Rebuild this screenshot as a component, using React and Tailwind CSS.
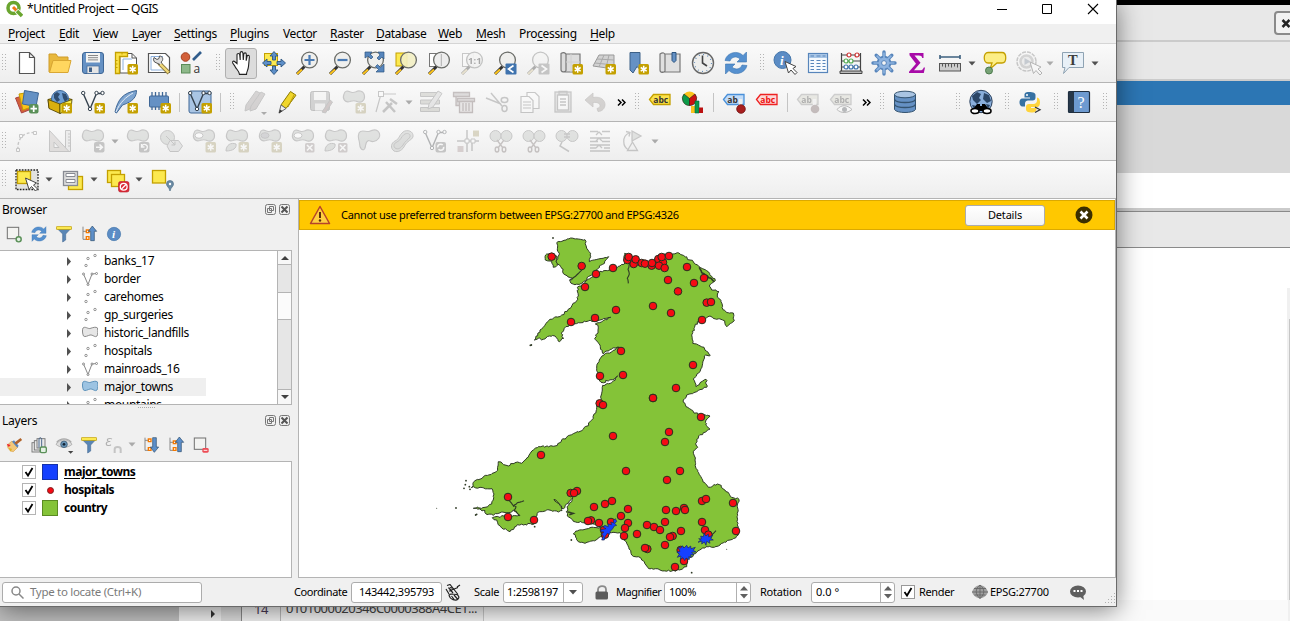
import React from "react";

/* ---------- icon primitives ---------- */
function Ic({ children, off, size }) {
  return (
    <svg viewBox="0 0 24 24" fill="none" className={(size || "h-6 w-6") + " shrink-0 overflow-visible " + (off ? "opacity-[.36] saturate-[.3]" : "")}>
      {children}
    </svg>
  );
}
const Star = ({ x = 13.5, y = 13 }) => (
  <g transform={`translate(${x} ${y})`}>
    <rect width="10.5" height="10.5" rx="1.5" fill="#c4a000" />
    <path d="M5.2 1.8v7M2.2 3.5l6 3.6M8.2 3.5l-6 3.6" stroke="#fff" strokeWidth="1.5" />
  </g>
);
const Blob = () => (
  <path d="M2 4C0 9 3 13 8 11.500c3-1 4-1.500 7 0 4 2 8-1 7.500-5.500C22 1 17 0 14 1.800c-3 1.500-3 1-6 0C5 .500 3 1 2 4Z" fill="#b4c0b4" stroke="#777" strokeWidth="1.100" />
);
const Lens = ({ children, fill = "#eeeeec" }) => (
  <g>
    <path d="M9.500 15.500 2 23" stroke="#333" strokeWidth="3" />
    <path d="M7 18.500 2 23" stroke="#fbc31c" strokeWidth="2" />
    <circle cx="14.500" cy="9" r="7.900" fill={fill} fillOpacity=".9" stroke="#6b6d69" strokeWidth="1.300" />
    {children}
  </g>
);
const Page = () => <path d="M4.500 1.500h10l5 5v16h-15zM14.500 1.500v5h5" fill="#fff" stroke="#555" strokeWidth="1.200" />;
const Vee = () => (
  <g stroke="#35424e" strokeWidth="1.400">
    <path d="m2 3 7 16L15.500 3.500h6" />
    <g fill="#fff" strokeWidth="1">
      <circle cx="2.200" cy="3" r="1.700" /><circle cx="9" cy="19" r="1.700" /><circle cx="15.500" cy="3" r="1.700" /><circle cx="21.500" cy="3" r="1.700" />
    </g>
  </g>
);
const Scissors = () => (
  <g stroke="#8a6a68" strokeWidth="1.400">
    <path d="m8 11 6 8M15 11l-6 8" /><ellipse cx="8" cy="20.500" rx="1.800" ry="2.500" /><ellipse cx="15" cy="20.500" rx="1.800" ry="2.500" />
  </g>
);
const Cursor = ({ x = 12, y = 10 }) => (
  <path transform={`translate(${x} ${y})`} d="m0 0 3.500 11.500 2.500-3 4 4.500 2-2-4-4 3-2z" fill="#fff" stroke="#444" />
);
const Tag = ({ t, f, s, c }) => (
  <g>
    <path d="M1.500 9.500 5.500 4.500H22v10H5.500z" fill={f} stroke={s} strokeWidth="1.300" />
    <text x="5.300" y="12.500" fontSize="8.500" fontWeight="700" fontFamily="Open Sans, sans-serif" fill={c}>{t}</text>
  </g>
);

/* ---------- icons ---------- */
const icons = {
  page: <Page />,
  folder: <g><path d="M1 3h7l2 3h10v4H5l-3 11H1z" fill="#e8b83c" stroke="#cf9c2b" /><path d="M5 9.500h18l-3 12H1.500z" fill="#ffd65f" stroke="#d9a733" /></g>,
  save: <g><rect x="1.500" y="1.500" width="21" height="21" rx="2.500" fill="#6591c4" stroke="#3f6796" /><rect x="5" y="2" width="14" height="9.500" fill="#f4f4f2" /><path d="M7 4.500h10M7 6.700h10M7 8.900h10" stroke="#888" /><rect x="6" y="15" width="12" height="7.500" fill="#e5e5e5" stroke="#3f6796" strokeWidth=".7" /><rect x="8" y="16.500" width="3" height="4.500" fill="#3f5f86" /></g>,
  layout: <g><path d="M6 2.500h12l4.500 4.500v15H6z" fill="#fff" stroke="#555" /><path d="M18 2.500V7h4.500" stroke="#555" /><path d="M9 19V8h9" stroke="#8cb0dd" /><path d="M1.500 1.500h12v4h-8v17h-4z" fill="#fbe24a" stroke="#c4a000" strokeWidth="1.300" /><path d="M1.500 9.500h2M1.500 13h2M1.500 16.500h2M8 1.500v2" stroke="#c4a000" /><Star /></g>,
  manager: <g><path d="M1.500 2.500h17l4 4v15h-21z" fill="#fff" stroke="#555" strokeWidth="1.200" /><path d="M4 19V5.500h12M4 19h13" stroke="#8cb0dd" /><path d="m12 12 10 10" stroke="#8c7a40" strokeWidth="4" /><path d="m13 13 8.500 8.500" stroke="#f0d878" strokeWidth="2.400" /><path d="M13 13.500 7.500 11A4 4 0 0 1 7 6.500l3 2 2-1 .5-2.500c4 0 4 5 1.500 6l1 1.500" fill="#ddd" stroke="#555" /></g>,
  style: <g><circle cx="5.500" cy="6" r="4.300" fill="#d2603a" stroke="#a43f1f" /><path d="m13 9 8-8" stroke="#315d8c" strokeWidth="2.600" /><rect x="1.500" y="13.500" width="8.500" height="8.500" fill="#8db889" stroke="#5a8c58" /><text x="13.500" y="22" fontSize="12" fontFamily="Open Sans" fill="#333">a</text></g>,
  hand: <path d="M6 12.500V3.800c0-1.800 2.500-1.800 2.700 0L9.200 9V2c0-1.800 2.600-1.800 2.700 0l.4 7 .5-6c.2-1.600 2.500-1.500 2.500.2l-.1 6.500.9-4.500c.4-1.400 2.400-1 2.300.7l-.9 9.500c-.3 4-2 5-2 8h-7c0-3-3-5-4.500-8L1.700 12c-.6-1.500 1-2.500 2.200-1.200z" transform="translate(2 0)" fill="#fff" stroke="#222" strokeWidth="1.100" />,
  pan: <g><rect x="2.500" y="2.500" width="13" height="12" fill="#fce94f" stroke="#c4a000" /><path d="m12 .5 4 4.500h-2.500v4h-3V5H8zM12 23.500l-4-4.500h2.500v-4h3v4H16zM.5 12 5 8v2.500h4v3H5V16zM23.500 12 19 8v2.500h-4v3h4V16z" fill="#5d8fc9" stroke="#2c5580" strokeWidth=".9" /></g>,
  zin: <Lens><path d="M14.500 4v10M9.500 9h10" stroke="#4a7ab3" strokeWidth="2.200" /></Lens>,
  zout: <Lens><path d="M9.500 9h10" stroke="#4a7ab3" strokeWidth="2.200" /></Lens>,
  zfull: <g><Lens /><path d="M4 1h7L9 3l3 3-2 2-3-3-3 2zM23 1v7l-2-2-3 3-2-2 3-3-2-3zM23 21h-8l2.500-2.500-3-3 2-2 3 3L23 13z" fill="#5786bd" stroke="#2c5580" strokeWidth=".7" /></g>,
  zsel: <g><rect x="2" y="2" width="11" height="13" fill="#fce94f" stroke="#c4a000" /><Lens fill="#f3efc4" /></g>,
  zlayer: <g><rect x="2.500" y="2.500" width="11" height="13" fill="#fff" stroke="#777" /><Lens fill="#ececec"><path d="M14.500 3v12" stroke="#bbb" /></Lens></g>,
  z11: <g><rect x="2.500" y="2.500" width="11" height="13" fill="#fff" stroke="#777" /><Lens><text x="8" y="12.500" fontSize="9.500" fontWeight="700" fontFamily="Open Sans" fill="#222">1:1</text></Lens></g>,
  zlast: <g><Lens /><rect x="12.500" y="12.500" width="11" height="11" rx="1" fill="#3f73ae" /><path d="m20.500 14.500-5 3.500 5 3.500" stroke="#fff" strokeWidth="1.700" /></g>,
  znext: <g><Lens /><rect x="12.500" y="12.500" width="11" height="11" rx="1" fill="#777" /><path d="m15.500 14.500 5 3.500-5 3.500" stroke="#fff" strokeWidth="1.700" /></g>,
  newmap: <g><path d="M2 2.500c3-2 5 0 5 1v16c-1 2-5 2-5-1zM7 3h14v18H4" fill="#ddd" stroke="#777" strokeWidth="1.200" /><path d="M12 3v18M7 11h14" stroke="#d0d0d0" /><Star /></g>,
  new3d: <g><path d="M7 4h15v14L1 15z" fill="#d2d2d2" stroke="#999" /><path d="m5 8 17 1M3 12l19 2M12 4 7 16M17 4l-3 13" stroke="#aaa" /><Star /></g>,
  bookmark: <g><path d="M5 1.500h10v17l-3-3-4 6.500-3-3z" fill="#6591c4" stroke="#3c6087" /><Star /></g>,
  bookshow: <g><path d="M2 3c3-2 5-1 5 1v16c-1 2-5 2-5-1zM7 3h15v18H4" fill="#e0e0e0" stroke="#777" strokeWidth="1.200" /><path d="M14 1.500h4v8l-2 2-2-2z" fill="#6591c4" stroke="#2c5580" /></g>,
  clock: <g><circle cx="12" cy="12" r="10.500" fill="#eeeeec" stroke="#666" strokeWidth="1.400" /><path d="M11.500 4.500V12l4.500 3" stroke="#444" strokeWidth="1.600" /><circle cx="12" cy="12" r="8.500" stroke="#3f73ae" strokeWidth="1.200" strokeDasharray=".8 3.650" /></g>,
  refresh: <g fill="#5590cf" stroke="#3a73b0" strokeWidth=".6"><path d="M1 9.500C3 1 14-1 19 4.500L22.500 1v10H13l3-3C12 4.500 7.500 6 6 10z" /><path d="M23 14.500C21 23 10 25 5 19.500L1.500 23V13H11l-3 3c4 3.500 8.500 2 10-2z" /></g>,
  identify: <g><circle cx="9.500" cy="9" r="8.500" fill="#5b8cc5" stroke="#4677ab" /><text x="7" y="14" fontSize="13" fontStyle="italic" fontWeight="700" fontFamily="Liberation Serif" fill="#fff">i</text><Cursor x={12} y={10.500} /></g>,
  table: <g><rect x="2.500" y="2.500" width="19" height="19" fill="#f6fafe" stroke="#5785bb" strokeWidth="1.200" /><rect x="3" y="3" width="18" height="4" fill="#a9c6e6" /><path d="M4.500 5H8M10.500 5h4M16.500 5h3M4.500 9.500H8M4.500 12.500H8M4.500 15.500H8M4.500 18.500H8M10.500 9.500h4M10.500 12.500h4M10.500 15.500h4M10.500 18.500h4M16.500 9.500h3M16.500 12.500h3M16.500 15.500h3M16.500 18.500h3" stroke="#5785bb" /></g>,
  abacus: <g><path d="M2.500 2v19M21.500 2v19M2.500 4h19M2.500 10h19M2.500 16h19" stroke="#444" strokeWidth="1.200" /><path d="M1 20h22v2.500H1z" fill="#bbb" stroke="#444" /><g fill="#fff" strokeWidth="1.200"><g stroke="#cc3030"><circle cx="10" cy="4" r="2" /><circle cx="18" cy="4" r="2" /></g><g stroke="#55ad55"><circle cx="7" cy="10" r="2" /><circle cx="12" cy="10" r="2" /></g><g stroke="#3f73ae"><circle cx="7" cy="16" r="2" /><circle cx="12" cy="16" r="2" /><circle cx="17" cy="16" r="2" /></g></g></g>,
  gear: <g><path d="M12 1v22M1 12h22M4.200 4.200l15.600 15.600M19.800 4.200 4.200 19.800" stroke="#5785bb" strokeWidth="3.400" strokeLinecap="round" /><circle cx="12" cy="12" r="5.600" fill="#8db3e0" stroke="#5785bb" strokeWidth="3.400" /><path d="M12 1.500v21M1.500 12h21M4.600 4.600l14.800 14.800M19.400 4.600 4.600 19.400" stroke="#8db3e0" strokeWidth="1.600" /><circle cx="12" cy="12" r="5.500" fill="#8db3e0" /><circle cx="12" cy="12" r="2.400" fill="#f5f5f5" stroke="#5785bb" /></g>,
  sigma: <path d="M4.500 2h14v5h-1.300c-.4-2-1.200-2.600-3.500-2.600H9.500l6 7.300-6.500 7.500h6c2 0 3-.7 3.800-2.800H20L18.800 22H4v-1.300l7-8-6.500-8.500z" fill="#a80ba8" />,
  ruler: <g><path d="M2 6h20M2 4v4M22 4v4" stroke="#3d607f" strokeWidth="1.600" /><rect x="1.500" y="12.500" width="21" height="7.500" fill="#ccc" stroke="#555" /><path d="M4.500 13v2.500M7.500 13v3.500M10.500 13v2.500M13.500 13v3.500M16.500 13v2.500M19.500 13v3.500" stroke="#555" /></g>,
  tip: <g><path d="M5 1.500h14c5 0 5 10.500 0 10.500h-5L7 18l2-6H5C0 12 0 1.500 5 1.500Z" fill="#fcee85" stroke="#c4a000" strokeWidth="1.300" /><circle cx="6" cy="19.500" r="3.500" fill="#77a276" stroke="#4b7a4b" /></g>,
  action: <g><circle cx="10.500" cy="10.500" r="9.500" stroke="#777" strokeWidth="1.500" strokeDasharray="4 1" /><circle cx="10.500" cy="10.500" r="6" fill="#ddd" stroke="#999" strokeWidth="2.500" /><path d="m8.500 7 6 3.500-6 3.500z" fill="#5785bb" /><Cursor x={14} y={11} /></g>,
  textann: <g><path d="M1.500 1.500h21v15H8l-5.500 6 1.500-6H1.500z" fill="#e8f0f7" stroke="#8fa3b3" /><text x="7" y="14" fontSize="14.500" fontWeight="700" fontFamily="Liberation Serif" fill="#3c3c3c">T</text></g>,

  dsm: <g><path d="m.500 8 10-3 6 14-10 4z" fill="#d2603a" stroke="#a44" /><path d="m4 4 12-2 3 14-11 4z" fill="#fbc31c" stroke="#c4a000" /><path d="m9.500.500 14 2.500-2.500 13.500L7.500 14z" fill="#6591c4" stroke="#3f6796" /><rect x="14" y="14" width="9.500" height="9.500" rx="2" fill="#5a9058" /><path d="M18.700 15.500v6.500M15.500 18.700H22" stroke="#fff" strokeWidth="1.700" /></g>,
  gpkg: <g><path d="M0 9.500 12 6l12 3.500L13 23 1 18z" fill="#d9af0e" stroke="#4c4000" strokeWidth=".8" /><circle cx="12" cy="9" r="8.500" fill="#6f9fd3" stroke="#3f6796" /><path d="m6 4 3-2 3 2-2 3 2 3-3 2-3-4zM14 3l4 1 2 5-3 3-2-4z" fill="#2f4d70" /><path d="M0 9.500 12 14v9.500L1 18.500z" fill="#d9af0e" stroke="#4c4000" strokeWidth=".8" /><path d="m24 9.500-12 4.500v9.500l11-5z" fill="#fcee50" stroke="#4c4000" strokeWidth=".8" /><Star /></g>,
  newshape: <g><Vee /><Star /></g>,
  feather: <g><path d="M1 22C4 9 9 3 22.500.500c0 6-3 11-14 14.500L2.500 23z" fill="#7da4d0" stroke="#3f6796" /><path d="M2 22C6 12 12 7 19 3" stroke="#e6eef7" /><Star /></g>,
  memory: <g><path d="M5 2v4M8.500 2v4M12 2v4M15.500 2v4M19 2v4M5 16v4M8.500 16v4M12 16v4" stroke="#3f6796" strokeWidth="1.300" /><rect x="2.500" y="6" width="19" height="11" rx="1" fill="#6591c4" stroke="#3f6796" /><Star /></g>,
  virtual: <g><rect x="1" y="1" width="22" height="22" rx="2" fill="#a9c5e4" stroke="#3f6796" /><Vee /><Star /></g>,
  pencils: <g fill="#a79494" stroke="#777"><path d="m2 21 1-6L13 1l4 2L7 19z" /><path d="m7 21 1-5L18 2l4 2-9 15z" /><path d="M18 22h6l-3 3z" fill="#333" stroke="none" /></g>,
  pencil: <g><path d="M5 15 14.500 1.500l5.500 3.700L10 18.500z" fill="#f0d62b" stroke="#8c7a00" /><path d="m12 17 6.500-13" stroke="#b89a0c" /><path d="m5 15-2 8 7-4.500z" fill="#eee" stroke="#666" /><path d="m4 19.500-1.200 4 3.700-2.400z" fill="#333" /></g>,
  savedit: <g><rect x="1.500" y="1.500" width="19" height="19" rx="2" fill="#999" stroke="#666" /><rect x="5" y="2" width="12" height="8" fill="#f4f4f2" /><rect x="6" y="13.500" width="10" height="7" fill="#e5e5e5" /><path d="m13 22 8-12 2.500 2-7 11z" fill="#b77" stroke="#777" /></g>,
  addpoly: <g><Blob /><Star /></g>,
  vertex: <g><path d="M1 22 6 4h15" stroke="#777" strokeWidth="1.200" /><rect x="3.500" y="1.500" width="5" height="5" fill="#fff" stroke="#777" /><path d="m8 22 9-9M11 12l9 10M15 9l7 5" stroke="#777" strokeWidth="2.500" /></g>,
  multiedit: <g><path d="M1.500 2.500h19v4h-19zM1.500 10h19v4h-19zM1.500 17.500h19v4h-19z" fill="#b3b596" stroke="#777" /><path d="m9 19 1-5 9-13 4 2.500L14 17z" fill="#ccc" stroke="#777" /></g>,
  trash: <g stroke="#8a5a5a" strokeWidth="1.300"><path d="M1.500 2.500h16v4h-16zM4 6.500v9h5" fill="#baa" /><path d="M5.500 8.500h17v3h-17z" fill="#cbb" /><path d="M7.500 11.500h13v11h-13z" fill="#dcc" /><path d="M11 13v8M14 13v8M17 13v8" /></g>,
  cut: <g stroke="#777" strokeWidth="1.500"><path d="m1 8 15 6M6 3l11 13" /><ellipse cx="19.500" cy="10" rx="3.300" ry="2.500" /><ellipse cx="19.500" cy="18.500" rx="2.500" ry="3" /></g>,
  copy: <g fill="#fff" stroke="#777" strokeWidth="1.200"><path d="M9 2.500h8l4 4v12H9z" /><path d="M3 6.500h8l4 4v12H3z" /><path d="M5 12h8M5 15h8M5 18h8" /></g>,
  paste: <g stroke="#777" strokeWidth="1.300"><rect x="4" y="2" width="16" height="20" fill="#ccc" /><rect x="6.500" y="5" width="11" height="15" fill="#fff" /><path d="M8 1.500h8v3H8zM9 9h6M9 12h6M9 15h6" /></g>,
  undo: <path d="M1 10 9 3v4.500c8-1.500 12 3 12 7 0 4-3 7-7 7l-1-3c5-1 4-7-4-6V17z" fill="#a8968a" stroke="#8a7a70" strokeWidth=".8" />,

  label: <Tag t="abc" f="#fbe24a" s="#c4a000" c="#333" />,
  diagram: <g><circle cx="8.500" cy="8.500" r="7" fill="#fbc31c" /><path d="M8.500 8.500 3 4a7 7 0 0 0 5.500 11.500z" fill="#0c9a48" stroke="#222" strokeWidth=".6" /><path d="m8.500 8.500 5.500-4.500a7 7 0 0 1-5.500 11.500z" fill="#cc1111" stroke="#222" strokeWidth=".6" /><path d="M10 16h4v7h-4z" fill="#fbc31c" /><path d="M14 11h4v12h-4z" fill="#0c9a48" stroke="#064" strokeWidth=".6" /><path d="M18 17.500h4V23h-4z" fill="#b11" /></g>,
  labpin: <g><Tag t="ab" f="#c3dcf7" s="#4a90d9" c="#333" /><path d="M18.500 9v9" stroke="#eee" strokeWidth="3.500" /><circle cx="19" cy="19" r="4.300" fill="#a81e1e" stroke="#701010" strokeWidth=".8" /></g>,
  labred: <Tag t="abc" f="#fbd8d8" s="#e22" c="#e11" />,
  labpin2: <g><Tag t="ab" f="#d2d2a8" s="#888" c="#333" /><path d="M18.500 9v9" stroke="#eee" strokeWidth="3.500" /><circle cx="19" cy="19" r="4.300" fill="#955" /></g>,
  labeye: <g><Tag t="abc" f="#d2d2a8" s="#888" c="#333" /><path d="M8 19.500c4-5 10-5 15 0-5 4-11 4-15 0z" fill="#fff" stroke="#555" /><circle cx="15.500" cy="19.500" r="2.500" fill="#456" /></g>,
  db: <g stroke="#34536f"><path d="M1.500 4.500v15c2 4 19 4 21 0v-15z" fill="#6591c4" /><ellipse cx="12" cy="4.500" rx="10.500" ry="3.300" fill="#a9c4e2" /><path d="M1.500 9.500c2 4 19 4 21 0M1.500 14.500c2 4 19 4 21 0" strokeWidth="1.500" /></g>,
  metasearch: <g><circle cx="12" cy="11.500" r="11.200" fill="#89aedb" stroke="#2a3f5a" /><path d="m3 6 5-4 4 2-2 4 2 2-4 4-4-4zM15 3l5 2 2 6-4 2-4-4zM3 15l5 1 2 4-5-1zM17 14l4 1-2 4z" fill="#2a4566" /><path d="m3 21 5-7h3v2h2v-2h3l5 7z" fill="#000" /><ellipse cx="6" cy="21" rx="4" ry="2.500" fill="#fff" stroke="#000" strokeWidth="1.600" /><ellipse cx="18" cy="21" rx="4" ry="2.500" fill="#fff" stroke="#000" strokeWidth="1.600" /></g>,
  python: <g><path d="M11 2c-4 0-4.500 1.500-4.500 3v2.500H12v1H4.500C2 8.500 1.500 11 1.500 12.500c0 2 1 4 3 4H7v-3c0-2 1.500-3 3-3h4.500c2 0 3-1 3-3V5c0-2-2-3-6.500-3z" fill="#3671a3" /><circle cx="9" cy="5" r="1" fill="#fff" /><path d="M19 7.500v3c0 2-1.500 3.500-3.500 3.500H11c-2 0-3 1-3 3v2.500c0 2 2 3 5.500 3 4 0 5-1.500 5-3V18H13v-1h6c2 0 3-2 3-4.500s-1-5-3-5z" fill="#ffd43b" /><path d="m17 17 5 2.800-5 2.700" stroke="#333" strokeWidth="1.300" /></g>,
  help: <g><rect x="1.500" y="1.500" width="21" height="21" rx="1" fill="#6d9ad0" stroke="#1f2f40" strokeWidth="1.200" /><path d="M2 2h5v20H2z" fill="#27384a" /><text x="10.500" y="17.500" fontSize="16" fontFamily="Liberation Serif" fill="#fff">?</text></g>,

  curve: <g stroke="#777"><path d="M3 21C2 10 8 3 20 3.500" strokeDasharray="3 2" strokeWidth="1.400" /><path d="M1.500 19.500h3v3h-3zM4.500 5.500h3v3h-3zM18.500 2.500h3v3h-3z" fill="#fff" /></g>,
  triangle: <g fill="#cdb9ad" stroke="#777"><path d="M17.500 1.500h5v21h-5z" fill="#ddd" /><path d="M20 5h2M20 8h2M20 11h2M20 14h2M20 17h2" /><path d="M1.500 1.500 21 22.500H1.500zM6 13v5.500h5z" fillRule="evenodd" /></g>,
  move: <g><Blob /><rect x="13" y="13" width="10.500" height="10.500" rx="2" fill="#777" /><path d="M15 18.200h6M18.500 15.500l2.800 2.700-2.800 2.700" stroke="#fff" strokeWidth="1.600" /></g>,
  rotate: <g><Blob /><rect x="13" y="13" width="10.500" height="10.500" rx="2" fill="#777" /><path d="M16 17a2.800 2.800 0 1 1 2 4M15.500 15v3h3" stroke="#fff" strokeWidth="1.300" /></g>,
  simplify: <g fill="#b4c0b4" stroke="#777"><circle cx="8.500" cy="8.500" r="7" /><path d="M11 11.500h8.500l4 5.500-4 5.500H11L8 17z" fill="#c9cccd" /><path d="m7 7 9 9M16 12.500V16h-3.500" /></g>,
  addring: <g><Blob /><ellipse cx="7" cy="6.500" rx="4" ry="2.800" fill="#fff" stroke="#777" /><Star /></g>,
  addpart: <g><Blob /><path d="M1 22c0-6 5-9 10-7 1 4-3 7-10 7z" fill="#b4c0b4" stroke="#777" /><Star /></g>,
  fillring: <g><Blob /><ellipse cx="7" cy="6.500" rx="4" ry="2.800" fill="#99a" stroke="#777" /><Star /></g>,
  delring: <g><Blob /><ellipse cx="7" cy="6.500" rx="4" ry="2.800" fill="#fff" stroke="#777" /><rect x="14" y="14" width="9.500" height="9.500" rx="1.500" fill="#a88" /><path d="m16 16 5.500 5.500m0-5.500L16 21.500" stroke="#fff" strokeWidth="1.600" /></g>,
  delpart: <g><Blob /><path d="M1 22c0-6 5-9 10-7 1 4-3 7-10 7z" fill="#b4c0b4" stroke="#777" /><rect x="14" y="14" width="9.500" height="9.500" rx="1.500" fill="#a88" /><path d="m16 16 5.500 5.500m0-5.500L16 21.500" stroke="#fff" strokeWidth="1.600" /></g>,
  reshape: <path d="M2 4C0 9 2 9 2.500 14c0 5 3 8.500 5 6 2-3 0-7 4-8.500 2 0 2 1.500 5 1 5-1 7-5 6-8C20-1 15 1 12 2.500 8 3 4 0 2 4Z" fill="#b4c0b4" stroke="#777" strokeWidth="1.100" />,
  offset: <g stroke="#777"><path d="M13 3c4-3 11-1 10 5-1 3-6 4-8 8-2 5-7 8-11 6-4-3-3-8 1-10 4-1 4-6 8-9z" fill="#b4c0b4" /><path d="M14 5.500c3-2 7-1 6 2.500-2 3-5 4-7 8-2 3-5 5-8 3-2-2-1-5 2-6 4-2 4-5 7-7.500z" fill="#aeb8ae" /></g>,
  rotpt: <g><Vee /><rect x="12.500" y="13" width="10.500" height="10.500" rx="2" fill="#777" /><circle cx="17.700" cy="18.200" r="3" stroke="#fff" strokeWidth="1.500" strokeDasharray="7 2" /></g>,
  trim: <g stroke="#777" strokeWidth="1.500"><path d="M11 1v22M1 12h22M16 14v8" /><path d="M9 10h4v4H9zM15 10h4v4h-4z" fill="#fff" strokeWidth="1" /><rect x="17" y="1.500" width="6" height="6" fill="#c4a000" stroke="none" /><rect x="1.500" y="17" width="6" height="6" fill="#c88" stroke="none" /></g>,
  split: <g><circle cx="6.500" cy="7" r="5.500" fill="#b4c0b4" stroke="#777" /><circle cx="17.500" cy="7" r="5.500" fill="#b4c0b4" stroke="#777" /><Scissors /></g>,
  merge: <g stroke="#777"><circle cx="6.500" cy="7" r="5.500" fill="#b4c0b4" /><circle cx="17.500" cy="7" r="5.500" fill="#b4c0b4" /><path d="M9 5h6M9 8h6M7 13l-2 4 9 5.500" strokeWidth="1.500" /></g>,
  mergeattr: <g stroke="#777" strokeWidth="1.300"><path d="M2 2.500h8M14 2.500h8M2 9h20M2 12.500h8M14 12.500h8M2 16h20M2 22h20M8 6l3-3 3 3M8 12l3-3 3 3M8 19l3-3 3 3M2 19h6M16 19h6" /></g>,
  rotsym: <g stroke="#777" strokeWidth="1.300"><path d="M8 21C1 18 1 7 8 4M5 2.500l4 1-1 4" /><path d="m11 2 9 5-9 5z" fill="#b4c0b4" /><path d="m11.500 13 5 8.500h-10z" fill="#eee" /></g>,

  select: <g><rect x="1" y="2" width="22" height="19.500" fill="#e2e2e0" stroke="#222" strokeWidth="1.300" strokeDasharray="1.700 1.200" /><rect x="2.500" y="3.500" width="13" height="12" fill="#fce94f" stroke="#c4a000" strokeWidth="1.300" /><Cursor x={10.500} y={10} /></g>,
  selform: <g><rect x="8.500" y="8.500" width="14" height="13" fill="#fce94f" stroke="#c4a000" strokeWidth="1.300" /><rect x="3.500" y="3.500" width="14" height="14" fill="#ddd" stroke="#888b93" strokeWidth="1.300" /><path d="M6 5.500h9v3H6zM6 11.500h9v3H6z" fill="#fff" stroke="#888b93" /></g>,
  desel: <g stroke="#c4a000" strokeWidth="1.300"><rect x="2.500" y="2.500" width="13" height="12" fill="#fce94f" /><rect x="6.500" y="6.500" width="13" height="12" fill="#fce94f" /><rect x="13.500" y="13.500" width="10.500" height="10.500" rx="2" fill="#dd2b38" stroke="#b41a26" strokeWidth=".6" /><circle cx="18.700" cy="18.700" r="3.400" stroke="#fff" /><path d="m16.500 21 4.500-4.500" stroke="#fff" /></g>,
  selloc: <g><rect x="2.500" y="2.500" width="13" height="12.500" fill="#fce94f" stroke="#c4a000" strokeWidth="1.300" /><path d="M20 23c-1-4-3.500-4.500-3.500-7a3.500 3.500 0 0 1 7 0c0 2.500-2.500 3-3.500 7z" fill="#6b8ba4" stroke="#51718a" strokeWidth=".7" /><circle cx="20" cy="16" r="1.200" fill="#fff" /></g>,

  addlayer: <g><rect x="2" y="2" width="17" height="17" fill="#f3f3f1" stroke="#777" strokeWidth="1.600" /><circle cx="19" cy="20" r="3.800" fill="#e4f1e4" stroke="#5a9058" strokeWidth="2.200" /></g>,
  dellayer: <g><rect x="2" y="1.500" width="17" height="17" fill="#f3f3f1" stroke="#777" strokeWidth="1.600" /><rect x="14" y="16.500" width="9.500" height="7" rx="2" fill="#ed4c55" /><path d="M16 20h5.500" stroke="#fff" strokeWidth="1.400" /></g>,
  filter: <g><path d="M1 3h22l-8.500 9v9l-4.500 3V12z" fill="#5a86b5" stroke="#4a7099" /><rect x="1" y="1" width="22" height="4" fill="#fce94f" stroke="#c4a000" /></g>,
  collapse: <g><path d="M3 1v19h5M3 8h5" stroke="#888" strokeWidth="1.500" /><path d="M8 6h4v4H8zM8 16h4v4H8z" stroke="#f57900" strokeWidth="2" fill="#fff" /><path d="m17 0 6.500 8H20v14h-5.500V8H11z" fill="#5d8fc9" stroke="#2c4b6b" /></g>,
  expand: <g><path d="M3 1v19h5M3 5h5" stroke="#888" strokeWidth="1.500" /><path d="M8 3h4v4H8zM8 16h4v4H8z" stroke="#f57900" strokeWidth="2" fill="#fff" /><path d="m17 23 6.500-8H20V1h-5.500v14H11z" fill="#5d8fc9" stroke="#2c4b6b" /></g>,
  info: <g><circle cx="12" cy="12" r="10" fill="#5b8cc5" stroke="#4677ab" /><text x="9" y="18" fontSize="17" fontStyle="italic" fontWeight="700" fontFamily="Liberation Serif" fill="#fff">i</text></g>,
  brush: <g><path d="m2 12 7-6 9 9-7 7c-5 0-9-5-9-10z" fill="#f2c879" stroke="#d9a04a" /><path d="m1 10 6 2-3 3z" fill="#e23" /><path d="m7 22-3-6 5 2z" fill="#e0b020" /><path d="m9 7 3-2 7 8-2 3z" fill="#5785bb" /><path d="m14 10 9-7" stroke="#b0632a" strokeWidth="4" /></g>,
  group: <g stroke="#777" strokeWidth="1.400" fill="#e8e8e8"><rect x="1.500" y="8.500" width="12" height="14" /><rect x="5" y="5.500" width="12" height="14" /><rect x="9" y="2.500" width="12" height="14" /><path d="M12 16V4c0-4 4-4 4 0v12" fill="none" stroke="#3f5f86" /><rect x="14" y="15" width="9" height="8.500" rx="2" fill="#e4f1e4" stroke="#5a9058" strokeWidth="2" /></g>,
  eye: <g><path d="M0 11C6 2 18 2 24 11c-6 6-18 6-24 0z" fill="#ddd" stroke="#999" /><path d="M1 8C7 1 17 1 23 8" stroke="#aaa" strokeWidth="2" /><circle cx="12" cy="11" r="5" fill="#6591b4" stroke="#35536b" /><circle cx="12" cy="11" r="2" fill="#123" /><path d="M18 21h8l-4 4z" fill="#444" /></g>,
  expr: <g><text x="-1" y="14" fontSize="23" fontFamily="Open Sans" fontStyle="italic" fill="#444">ε</text><path d="M13 24v-6c0-4 9-4 9 0v6" stroke="#777" strokeWidth="3" /></g>,
};

/* ---------- toolbar parts ---------- */
const Dots = () => (
  <svg width="5" height="19" className="shrink-0">
    {[0, 1, 2, 3, 4, 5].map((r) => (
      <g key={r} fill="#b4b4b4">
        <rect x="0" y={r * 3} width="1" height="1" /><rect x="3" y={r * 3} width="1" height="1" />
      </g>
    ))}
  </svg>
);
const Grip = ({ w }) => <div className={"flex shrink-0 items-center justify-end pr-[3px] " + w}><Dots /></div>;
const Sep = () => <div className="flex w-2 shrink-0 justify-center"><div className="h-[19px] w-px bg-[#c4c4c4]" /></div>;
const Arr = ({ off, w }) => (
  <div className={"flex shrink-0 justify-center " + (w || "w-3")}>
    <svg width="8" height="5"><path d="M.5.500h7L4 4.500z" fill={off ? "#aaa" : "#505050"} /></svg>
  </div>
);
const More = ({ w }) => (
  <div className={"flex shrink-0 justify-center " + w}>
    <svg width="9" height="7" fill="none" stroke="#000" strokeWidth="1.500"><path d="m1 .500 3 3-3 3M5 .500l3 3-3 3" /></svg>
  </div>
);
const B = ({ n, off, on }) => (
  <div className="flex w-[33px] shrink-0 items-center justify-center">
    <div className={on ? "flex h-[31px] w-[32px] items-center justify-center rounded-[3px] border border-[#b0b0b0] bg-[#dcdcdc]" : "flex"}>
      <Ic off={off}>{icons[n]}</Ic>
    </div>
  </div>
);
const group = (names, off) => names.split(" ").map((n, i) => <B key={n + i} n={n} off={off} />);
const Bar = ({ children, h }) => (
  <div className={"flex shrink-0 items-center border-b border-[#b4b4b4] bg-gradient-to-b from-[#fafafa] to-[#eeeeee] " + (h || "h-[39px]")}>{children}</div>
);

/* ---------- map data ---------- */
const N = (s) => s.split(" ").map((p) => { const [x, y] = p.split(",").map(Number); return [520 + x / 3, 230 + y / 3]; });
const S = (s) => s.split(" ").map((p) => { const [x, y] = p.split(",").map(Number); return [430 + x / 3, 390 + y / 3]; });

/* adds small deterministic indentations between the surveyed points */
function coast(pts, amp, open) {
  const out = [];
  let seed = 7;
  const rnd = () => { seed = (seed * 16807) % 2147483647; return seed / 2147483647 - 0.5; };
  pts.forEach((p, i) => {
    if (open && i === pts.length - 1) { out.push(p.join(",")); return; }
    const q = pts[(i + 1) % pts.length];
    const n = Math.max(1, Math.round(Math.hypot(q[0] - p[0], q[1] - p[1]) / 2));
    for (let k = 0; k < n; k++) {
      const a = k ? amp : 0;
      out.push([(p[0] + ((q[0] - p[0]) * k) / n + rnd() * a).toFixed(1), (p[1] + ((q[1] - p[1]) * k) / n + rnd() * a).toFixed(1)].join(","));
    }
  });
  return out.join(" ");
}
const mainland = [
  ...N("172,172 185,168 198,152 215,142 230,133 240,124 262,122 280,120 300,108 316,97 312,85 314,70 324,74 332,92 345,104 365,106 395,104 412,84 428,74 445,72 472,68 490,76 510,90 535,108 542,113 560,122 586,152 575,160 568,168 575,180 597,185 592,195 603,215 610,240 625,248 640,249 643,272 632,280 621,290 608,270 590,268 570,258 550,268 532,275 522,295 515,315 518,340 535,345 552,352 560,364 571,376 553,378 548,400 540,425 520,447 528,470 540,458 558,448 560,472 530,485 500,495 490,510 498,530"),
  ...S("785,60 805,75 840,78 828,90 827,105 840,117 820,128 800,148 798,165 803,172 790,185 795,210 798,235 815,265 835,292 862,282 885,300 905,322 927,328 922,345 922,370 924,400 925,435 900,450 870,465 845,472 828,470 800,486 772,508 770,530 748,540 720,544 690,540 655,535 640,512 625,500 605,495 590,460 580,440 570,428 545,428 520,440 490,452 465,460 445,455 430,432 448,420 480,413 512,412 500,402 470,399 430,394 412,378 411,350 425,335 428,322 415,340 400,356 385,340 372,328 395,350 396,362 385,366 350,360 325,366 316,382 312,402 285,403 262,404 240,425 215,414 204,402 200,390 187,383 205,380 240,378 268,376 250,360 245,366 215,366 190,376 168,372 165,362 130,355 165,352 185,342 192,312 186,296 150,292 124,293 135,272 160,260 200,244 205,215 235,228 255,218 275,220 290,204 310,180 325,170 375,168 395,150 425,134 460,118 490,85 500,52 505,32"),
  ...N("242,512 247,480 248,466 275,458 293,438 265,453 243,457 231,440 230,415 238,390 252,375 275,366 298,352 270,358 250,372 240,345 224,325 234,300 234,286 226,282 245,276 272,262 240,270 225,274 205,273 175,278 150,283 133,295 123,310 131,325 118,335 105,318 88,318 70,328 55,325 43,330 60,300 90,268 125,255 150,235 170,212 174,190"),
];
const anglesey = N("110,38 132,31 152,24 175,27 195,29 200,55 212,70 208,95 235,87 266,80 248,103 232,117 217,133 200,148 185,160 165,164 150,154 158,145 135,134 122,110 108,96 118,70 112,60");
const holy = N("75,80 80,72 95,70 110,78 108,94 112,106 100,112 95,94 76,90");
const dots = [
  ...N("95,80 185,108 228,132 279,114 195,171 322,90 326,81 341,102 347,88 365,99 375,101 395,107 396,99 415,87 429,97 425,81 447,78 417,107 434,114 501,111 552,144 522,159 444,150 474,184 560,218 573,216 546,270 399,228 453,249 288,240 225,264 153,276 303,363 309,435 240,438 519,405 468,474 399,504 239,520 249,525"),
  ...S("669,24 813,81 717,126 705,156 549,138 333,195 588,243 750,243 711,270 234,321 234,381 312,390 441,303 422,309 432,309 492,351 525,342 546,333 594,357 573,378 594,399 585,414 582,438 507,399 483,391 474,393 543,396 522,420 525,434 621,432 651,405 672,411 690,420 705,396 708,360 738,363 762,354 765,360 816,333 828,327 909,339 918,423 816,396 825,420 835,434 753,423 728,438 720,441 705,465 652,477 645,474 752,480 762,513 735,531"),
];
const towns = [
  S("556,386 550,392 552,399 542,396 545,404 534,402 535,410 524,406 520,412 528,416 513,419 512,425 522,426 515,432 520,438 515,450 523,450 525,440 532,430 539,433 541,424 548,416 553,408 560,406 554,401 560,394"),
  S("744,472 752,474 757,467 762,474 770,466 774,474 782,468 783,476 796,472 790,481 798,486 785,487 792,494 782,494 784,502 776,500 778,509 768,504 764,512 759,503 751,508 753,498 742,502 748,492 740,486 750,484"),
  S("806,446 814,447 812,438 820,440 822,430 828,438 835,432 836,441 848,436 842,445 850,450 838,451 840,460 830,454 828,466 823,456 815,462 816,453 804,457 812,450"),
];
const str = (a) => a.map((p) => p[0].toFixed(1) + "," + p[1].toFixed(1)).join(" ");

function WalesMap() {
  return (
    <svg viewBox="299 230 816 347" className="block h-full w-full">
      <g fill="#84c338" stroke="#2f3a26" strokeWidth="1" strokeLinejoin="round">
        <polygon points={coast(mainland, 1.900)} />
        <polygon points={coast(anglesey, 1.700)} />
        <polygon points={coast(holy, 1.200)} />
      </g>
      <g stroke="#2f3a26" strokeWidth="1.100" fill="none">
        <polyline points={coast(N("330,98 324,118 328,132 322,145 325,160"), 1, true)} />
        <polyline points={coast(N("148,152 170,135 186,120"), 1, true)} />
        <polyline points={coast(N("538,112 545,128 562,138 582,155"), 1.500, true)} strokeWidth="1.600" />
        <polyline points={coast(S("236,330 248,345 258,350 252,362 262,370 270,378"), 1.500, true)} />
        <polyline points={coast(S("250,350 262,338 282,332"), 1.500, true)} />
        <polyline points={coast(S("840,442 848,432 858,422"), 1, true)} />
        <polyline points={coast(S("413,366 430,370 418,374"), 1, true)} strokeWidth="1.500" />
      </g>
      <g fill="#2f3a26">
        {[...N("99,24 34,345 31,346"), ...S("108,272 106,284 102,295 118,290 120,298 78,354 140,373 137,375 424,450 785,548 314,410")].map((p, i) => (
          <circle key={i} cx={p[0]} cy={p[1]} r=".9" />
        ))}
        {S("20,355 890,478").map((p, i) => <circle key={i} cx={p[0]} cy={p[1]} r=".5" />)}
      </g>
      <g fill="#f60a14" stroke="#26301f" strokeWidth="1">
        {dots.map((p, i) => <circle key={i} cx={p[0]} cy={p[1]} r="3.800" />)}
      </g>
      <g fill="#1440ff" stroke="#1f2a58" strokeWidth=".7">
        {towns.map((t, i) => <polygon key={i} points={str(t)} />)}
      </g>
    </svg>
  );
}

/* ---------- docks ---------- */
function DockTitle({ children, h }) {
  return (
    <div className={"flex shrink-0 items-center pl-[2px] pr-px " + h}>
      <span className="flex-1 tracking-[-0.2px]">{children}</span>
      <svg width="26" height="12" fill="none" stroke="#777">
        <rect x=".5" y=".5" width="10" height="10" rx="2" /><path d="M4.500 2.500h4v4h-4zM2.500 4.500v4h4v-4z" />
        <rect x="14.500" y=".5" width="10" height="10" rx="2" /><path d="m16.500 2.500 6 6m0-6-6 6" stroke="#555" strokeWidth="2" />
      </svg>
    </div>
  );
}
const Small = ({ n, off }) => <div className="flex w-[25px] shrink-0 justify-center"><Ic size="h-4 w-4" off={off}>{icons[n]}</Ic></div>;

function LayerGlyph({ k, sel }) {
  return (
    <svg width="16" height="16" fill="none" className="shrink-0">
      {k === "p" && <g stroke="#888" fill="#fff" strokeWidth=".9"><circle cx="4" cy="12.500" r="1.200" /><circle cx="6" cy="5.500" r="1.200" /><circle cx="13" cy="2.500" r="1.200" /></g>}
      {k === "l" && <g stroke="#888"><path d="M1.500 3 6 13.500 10 3l4.500-.500" /><g fill="#fff"><circle cx="1.500" cy="3" r="1" /><circle cx="6" cy="13.500" r="1" /><circle cx="10" cy="3" r="1" /><circle cx="14.500" cy="2.500" r="1" /></g></g>}
      {k === "a" && <path d="M1 3c2-2 5 1 7 .500 3-1 6-2 7.500-.500.500 3 .5 6-.5 8-2 2-4-1.500-7-1-2 .500-5 2.500-6.500 1C.500 9 0 5 1 3Z" fill={sel ? "#9cc3e2" : "#e6e6e6"} stroke={sel ? "#5e93bb" : "#8a8a8a"} />}
    </svg>
  );
}
const tree = [["banks_17", "p"], ["border", "l"], ["carehomes", "p"], ["gp_surgeries", "p"], ["historic_landfills", "a"], ["hospitals", "p"], ["mainroads_16", "l"], ["major_towns", "a"], ["mountains", "p"]];

const Check = ({ sm }) => (
  <svg width="14" height="14" className="shrink-0"><rect x=".5" y=".5" width="13" height="13" fill="#fff" stroke={sm ? "#999" : "#b4b4b4"} /><path d="m3.500 7 2.500 3.500 4.500-7.500" stroke="#000" strokeWidth="1.800" fill="none" /></svg>
);

/* ---------- status ---------- */
const Spin = () => (
  <div className="flex h-full w-[14px] flex-col items-center justify-center gap-[3px] border-l border-[#b0b0b0]">
    <svg width="8" height="5"><path d="M4 0 8 4.500H0z" fill="#606060" /></svg>
    <svg width="8" height="5"><path d="M4 4.500 8 0H0z" fill="#606060" /></svg>
  </div>
);
const field = "flex h-[21px] shrink-0 items-center rounded-[3px] border border-[#acacac] bg-white ";

const menus = [["", "P", "roject", "w-[51px]"], ["", "E", "dit", "w-[34px]"], ["", "V", "iew", "w-[39px]"], ["", "L", "ayer", "w-[42px]"], ["", "S", "ettings", "w-[56px]"], ["", "P", "lugins", "w-[53px]"], ["Vect", "o", "r", "w-[47px]"], ["", "R", "aster", "w-[46px]"], ["", "D", "atabase", "w-[62px]"], ["", "W", "eb", "w-[38px]"], ["", "M", "esh", "w-[43px]"], ["Pro", "c", "essing", "w-[71px]"], ["", "H", "elp", "w-[40px]"]];

function Backdrop() {
  return (
    <div className="flex h-full flex-col">
      <div className="flex flex-1 flex-col pl-[1116px]">
        <div className="h-[5px] bg-black" />
        <div className="flex h-[35px] items-center justify-end overflow-hidden bg-[#e8e8e8]">
          <div className="-mr-2 flex h-6 w-6 items-center justify-center rounded border-2 border-[#8a8a8a] bg-[#f2f2f2]">
            <svg width="10" height="10"><path d="m1.500 2 7 7m0-7-7 7" stroke="#222" strokeWidth="2.500" /></svg>
          </div>
        </div>
        <div className="h-[2px] bg-[#cbcbcb]" />
        <div className="h-[37px] bg-[#e8e8e8]" />
        <div className="h-[2px] bg-[#cbcbcb]" />
        <div className="h-6 bg-[#2c76b4]" />
        <div className="h-[68px] bg-[#d9d9d9]" />
        <div className="h-[35px] bg-white" />
        <div className="h-[3px] bg-[#cbcbcb]" />
        <div className="h-[37px] border-y border-[#8a8a8a] bg-[#e8e8e8]" />
        <div className="flex flex-1 justify-end bg-white">
          <div className="mt-10 flex w-[3px] justify-end bg-[#f0f0f0] pt-[31px]"><div className="w-px bg-[#c6c6c6]" /></div>
        </div>
      </div>
      <div className="flex h-[21px] shrink-0 items-end bg-white text-[13px]">
        <div className="h-full w-[179px] bg-[#c0c0c0]" />
        <div className="flex h-full w-[42px] items-end justify-end bg-[#f1f1f1] pb-[3px] pr-[5px]"><svg width="6" height="8"><path d="m1 0 4 4-4 4z" fill="#333" /></svg></div>
        <div className="h-full w-[21px] border-r border-[#8a8a8a] bg-[#dedede]" />
        <div className="h-full w-[39px] border-r border-[#bbb] bg-[#f3f3f3] text-center text-[#4a3a55]"><span className="leading-[16px] tracking-[-0.5px]">14</span></div>
        <div className="h-full w-[203px] border-r border-[#ccc] bg-[#f6f6f6] pl-[5px] text-[#444]"><span className="block whitespace-nowrap leading-[17px] tracking-[-0.52px]">0101000020346C0000388A4CE1...</span></div>
        <div className="h-full w-[804px] bg-[#fafafa]" />
        <div className="h-full w-[2px] bg-[#f0f0f0]" />
      </div>
    </div>
  );
}

export default function App() {
  return (
    <div className="relative h-[621px] w-[1290px] overflow-hidden bg-white font-['Noto_Sans','Open_Sans',sans-serif] text-[12px] text-black">
      <Backdrop />
      <div className="absolute left-0 top-0 flex h-[607px] w-[1117px] flex-col border-b border-r border-[#6a6a6a] bg-[#f0f0f0] shadow-[0_3px_24px_rgba(0,0,0,0.5)]">
        {/* title bar */}
        <div className="flex h-6 shrink-0 items-center bg-white pl-[6px]">
          <svg width="17" height="18" viewBox="0 0 17 18" className="-mt-[7px]"><circle cx="7.500" cy="8" r="5.500" fill="#fff" stroke="#6aa52f" strokeWidth="3.500" /><path d="m7 7 3.500 3.500" stroke="#ee7913" strokeWidth="3" /><path d="m10.500 10.500 5 5" stroke="#fff" strokeWidth="5" /><path d="m11 11 5 5" stroke="#6aa52f" strokeWidth="3.500" /></svg>
          <span className="-mt-[7px] ml-1 flex-1 tracking-[-0.42px]">*Untitled Project — QGIS</span>
          <svg width="104" height="12" className="-mt-[7px] mr-[16px]" fill="none" stroke="#000"><path d="M1 6.500h10M92 1l10 10m0-10L92 11" strokeWidth="1.100" /><path d="M46.500 1.500h9v9h-9z" /></svg>
        </div>
        {/* menu bar */}
        <div className="flex h-5 shrink-0 items-center border-b border-[#d5d5d5] pl-2">
          {menus.map((m, i) => (
            <div key={i} className={"shrink-0 whitespace-nowrap tracking-[-0.35px] " + m[3]}>{m[0]}<u className="underline-offset-2">{m[1]}</u>{m[2]}</div>
          ))}
        </div>
        <Bar>
          <Grip w="w-[10px]" />{group("page folder save layout manager style")}
          <Grip w="w-[16px]" /><B n="hand" on />{group("pan zin zout zfull zsel zlayer")}<B n="z11" off />
          <B n="zlast" /><B n="znext" off />{group("newmap new3d bookmark bookshow clock refresh")}
          <Grip w="w-[16px]" />{group("identify table abacus gear sigma ruler")}<Arr />
          <B n="tip" /><B n="action" off /><Arr off /><B n="textann" /><Arr />
        </Bar>
        <Bar>
          <Grip w="w-[10px]" />{group("dsm gpkg newshape feather memory")}<Sep /><B n="virtual" /><Sep />
          <Grip w="w-[14px]" /><B n="pencils" off /><B n="pencil" />{group("savedit addpoly vertex", true)}<Arr off w="w-[11px]" />
          {group("multiedit trash cut copy paste undo", true)}<More w="w-[19px]" /><Grip w="w-[12px]" />
          {group("label diagram")}<Sep />{group("labpin labred")}<Sep />{group("labpin2 labeye", true)}
          <More w="w-[19px]" /><Grip w="w-[12px]" /><B n="db" /><Grip w="w-[43px]" /><B n="metasearch" />
          <Grip w="w-[16px]" /><B n="python" /><Grip w="w-[16px]" /><B n="help" /><Grip w="w-[16px]" />
        </Bar>
        <Bar>
          <Grip w="w-[10px]" />{group("curve triangle move", true)}<Arr off />
          {group("rotate simplify addring addpart fillring delring delpart reshape offset rotpt trim split split merge mergeattr rotsym", true)}<Arr off />
        </Bar>
        <Bar h="h-[38px]">
          <Grip w="w-[10px]" /><B n="select" /><Arr /><B n="selform" /><Arr /><B n="desel" /><Arr /><B n="selloc" />
        </Bar>

        <div className="flex min-h-0 flex-1">
          {/* docks */}
          <div className="flex w-[298px] shrink-0 flex-col pr-[6px]">
            <DockTitle h="h-[22px]">Browser</DockTitle>
            <div className="flex h-[29px] shrink-0 items-center pb-[3px] pl-px">
              <Small n="addlayer" /><Small n="refresh" /><Small n="filter" /><Small n="collapse" /><Small n="info" />
            </div>
            <div className="flex h-[155px] shrink-0 border-y border-r border-[#b4b4b4] bg-white">
              <div className="flex-1 overflow-hidden pt-px">
                {tree.map(([t, k]) => (
                  <div key={t} className={"flex h-[18px] w-[206px] items-center pl-[66px] " + (t === "major_towns" ? "bg-[#efefef]" : "")}>
                    <svg width="6" height="9" className="mr-[10px] shrink-0"><path d="m1 0 4 4.500L1 9z" fill="#505050" /></svg>
                    <LayerGlyph k={k} sel={t === "major_towns"} />
                    <span className="ml-[6px] whitespace-nowrap leading-[18px] tracking-[-0.32px]">{t}</span>
                  </div>
                ))}
              </div>
              <div className="flex w-[14px] flex-col border-l border-[#b4b4b4] bg-[#e6e6e6]">
                <div className="flex h-[14px] items-center justify-center border-b border-[#b4b4b4] bg-[#f7f7f7]"><svg width="8" height="4"><path d="M4 0 8 4H0z" fill="#404040" /></svg></div>
                <div className="h-[27px]" />
                <div className="h-[28px] border-y border-[#b4b4b4] bg-[#fbfbfb]" />
                <div className="flex-1" />
                <div className="flex h-[15px] items-center justify-center border-t border-[#b4b4b4] bg-[#f7f7f7]"><svg width="8" height="4"><path d="M4 4 8 0H0z" fill="#404040" /></svg></div>
              </div>
            </div>
            <div className="flex h-[5px] shrink-0 items-center justify-center"><div className="w-[17px] border-t border-dotted border-[#aaa]" /></div>
            <DockTitle h="h-[22px]">Layers</DockTitle>
            <div className="flex h-[29px] shrink-0 items-center pb-[4px] pl-px">
              <Small n="brush" /><Small n="group" /><Small n="eye" /><Small n="filter" /><Small n="expr" off /><Arr off w="w-[12px]" /><Small n="expand" /><Small n="collapse" /><Small n="dellayer" />
            </div>
            <div className="h-[117px] shrink-0 border-y border-r border-[#b4b4b4] bg-white pt-px font-bold tracking-[-0.5px]">
              <div className="flex h-[18px] items-center pl-[22px]"><Check /><div className="ml-[6px] mr-[6px] h-4 w-4 border border-[#1431a8] bg-[#1440ff]" /><u className="leading-[18px] underline-offset-2">major_towns</u></div>
              <div className="flex h-[18px] items-center pl-[22px]"><Check /><div className="ml-[6px] mr-[6px] flex h-4 w-4 items-center justify-center"><div className="h-[7px] w-[7px] rounded-full border border-[#7c2020] bg-[#f60a14]" /></div><span>hospitals</span></div>
              <div className="flex h-[18px] items-center pl-[22px]"><Check /><div className="ml-[6px] mr-[6px] h-4 w-4 border border-[#5a8a22] bg-[#84c338]" /><span>country</span></div>
            </div>
          </div>
          {/* map canvas */}
          <div className="flex h-[379px] flex-1 flex-col border-b border-l border-r border-[#b4b4b4] bg-white">
            <div className="mt-px flex h-[30px] shrink-0 items-center border border-[#dba900] bg-[#ffc800] pl-[9px] text-[11px]">
              <svg width="22" height="20" viewBox="0 0 22 20"><path d="M11 1.500 20.500 18.500h-19z" fill="#ffcf40" stroke="#b5432a" strokeWidth="1.500" strokeLinejoin="round" /><path d="M11 7v6" stroke="#5a2d0a" strokeWidth="2" /><circle cx="11" cy="15.500" r="1.200" fill="#5a2d0a" /></svg>
              <span className="ml-[10px] flex-1 whitespace-nowrap pt-px tracking-[-0.31px]">Cannot use preferred transform between EPSG:27700 and EPSG:4326</span>
              <div className="flex h-[21px] w-20 items-center justify-center rounded-[3px] border border-[#acacac] bg-gradient-to-b from-white to-[#f3f3f3] tracking-[-0.2px]">Details</div>
              <svg width="18" height="18" className="ml-[30px] mr-[21px]"><circle cx="9" cy="9" r="8.500" fill="#3b2f00" /><path d="m5.500 5.500 7 7m0-7-7 7" stroke="#fff" strokeWidth="2.600" /></svg>
            </div>
            <div className="h-[347px] w-[816px]"><WalesMap /></div>
          </div>
        </div>

        {/* status bar */}
        <div className="flex h-[28px] shrink-0 items-center pl-[2px] text-[11px] tracking-[-0.25px]">
          <div className={field + "w-[200px] pl-2 text-[11.5px] tracking-[-0.3px] text-[#7a7a7a]"}>
            <svg width="13" height="13" fill="none" stroke="#888" strokeWidth="1.500" className="mr-[6px]"><circle cx="5" cy="5" r="4" /><path d="m8 8 4.500 4.500" /></svg>
            Type to locate (Ctrl+K)
          </div>
          <span className="ml-[92px] w-[57px] shrink-0 pt-px tracking-[-0.4px]">Coordinate</span>
          <div className={field + "w-[91px] justify-center pt-px"}>143442,395793</div>
          <svg width="17" height="17" className="ml-[3px] shrink-0" fill="none" stroke="#222" strokeWidth="1.200"><path d="m2 1.500 3-1 8 10M1 5l3 5M4 7l9-3.500M5 3.500l3.500 1M3.500 3.500 8 9M12 3l3-2M6 10l-2 1c1 5 7 6 9 4s0-4-1.500-4.500zM6.500 12l3 4M9 11l3.500 4" /></svg>
          <span className="ml-[12px] w-[29px] shrink-0 pt-px">Scale</span>
          <div className={field + "w-[80px] justify-between pl-[3px]"}><span className="pt-px">1:2598197</span><div className="flex h-full w-[19px] items-center justify-center border-l border-[#b0b0b0]"><svg width="8" height="5"><path d="M0 0h8L4 4.500z" fill="#505050" /></svg></div></div>
          <svg width="14" height="15" className="ml-[12px] shrink-0"><path d="M3 7V4.500c0-4.500 8-4.500 8 0V7" fill="none" stroke="#8a8a8a" strokeWidth="1.800" /><rect x=".5" y="6.500" width="12.500" height="8" rx="1.500" fill="#5c5c5c" /></svg>
          <span className="ml-[7px] w-[48px] shrink-0 pt-px tracking-[-0.5px]">Magnifier</span>
          <div className={field + "w-[87px] justify-between pl-1"}><span className="pt-px">100%</span><Spin /></div>
          <span className="ml-[9px] w-[51px] shrink-0 pt-px">Rotation</span>
          <div className={field + "w-[84px] justify-between pl-1"}><span className="pt-px tracking-normal">0.0 °</span><Spin /></div>
          <div className="ml-[6px]"><Check sm /></div>
          <span className="ml-1 w-[53px] shrink-0 pt-px tracking-[-0.35px]">Render</span>
          <svg width="16" height="16" className="shrink-0"><path d="M0 8C1 5 3 2 8 1c5 1 7 4 8 7-1 3-3 5.500-8 6.500C3 13.500 1 11 0 8z" fill="#a0a0a0" /><path d="M0 8h16M2 4.500h12M2.500 11h11M8 1v13.500M8 1C3 5 3 10 8 14.500M8 1c5 4 5 9 0 13.500" stroke="#666" fill="none" strokeWidth=".9" /></svg>
          <span className="ml-[2px] w-[80px] shrink-0 pt-px tracking-[-0.25px]">EPSG:27700</span>
          <svg width="16" height="15" className="shrink-0"><ellipse cx="8" cy="6.500" rx="8" ry="6" fill="#5f5f5f" /><path d="m9 11 5 4-1-6z" fill="#5f5f5f" /><path d="M3.500 6h2M7 6h2M10.500 6h2" stroke="#fff" strokeWidth="1.800" /></svg>
          <svg width="11" height="11" className="mb-[2px] ml-auto self-end" fill="#b0b0b0">{[[9, 0], [6, 3], [9, 3], [3, 6], [6, 6], [9, 6], [0, 9], [3, 9], [6, 9], [9, 9]].map(([x, y]) => <rect key={x + "-" + y} x={x} y={y} width="1" height="1" />)}</svg>
        </div>
      </div>
    </div>
  );
}
